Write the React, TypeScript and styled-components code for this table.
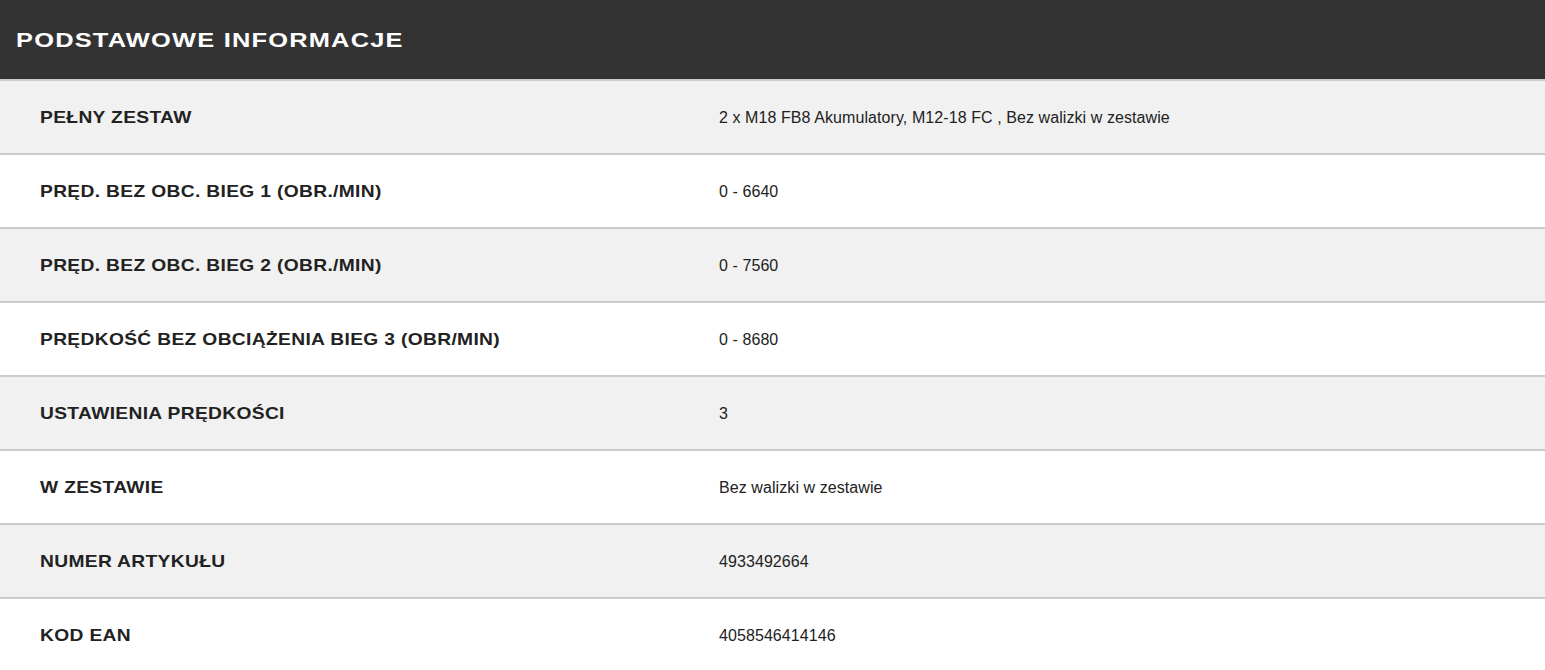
import styled, { createGlobalStyle } from "styled-components";

const GlobalStyle = createGlobalStyle`
    body {
        margin: 0;
        background: #ffffff;
        font-family: "Liberation Sans", Arial, sans-serif;
    }
`;

const Section = styled.section`
    width: 100%;
    overflow: hidden;
`;

const Header = styled.header`
    height: 79px;
    background-color: #333333;
    display: flex;
    align-items: center;
    padding-left: 16px;
`;

// the original font is an extended grotesk, so stretch Liberation a bit
const Title = styled.h2`
    margin: 0;
    color: #ffffff;
    font-size: 21px;
    font-weight: 700;
    letter-spacing: 1px;
    transform: scaleX(1.21);
    transform-origin: left center;
    white-space: nowrap;
`;

const SpecList = styled.dl`
    margin: 0;
`;

// odd rows are grey, even rows white
const Row = styled.div<{ $striped: boolean }>`
    display: grid;
    grid-template-columns: 719px 1fr;
    align-items: center;
    height: 72px;
    border-top: 2px solid #cccccc;
    background-color: ${(props) => (props.$striped ? "#f1f1f1" : "#ffffff")};
`;

const Label = styled.dt`
    padding-left: 40px;
    padding-top: 1px;
    color: #222222;
    font-size: 17px;
    font-weight: 700;
`;

const LabelText = styled.span`
    display: inline-block;
    letter-spacing: 0.3px;
    transform: scaleX(1.13);
    transform-origin: left center;
    white-space: nowrap;
`;

const Value = styled.dd`
    margin: 0;
    padding-top: 2px;
    color: #222222;
    font-size: 16px;
    letter-spacing: 0.08px;
`;

interface Spec {
    label: string;
    value: string;
}

const specs: Spec[] = [
    { label: "PEŁNY ZESTAW", value: "2 x M18 FB8 Akumulatory, M12-18 FC , Bez walizki w zestawie" },
    { label: "PRĘD. BEZ OBC. BIEG 1 (OBR./MIN)", value: "0 - 6640" },
    { label: "PRĘD. BEZ OBC. BIEG 2 (OBR./MIN)", value: "0 - 7560" },
    { label: "PRĘDKOŚĆ BEZ OBCIĄŻENIA BIEG 3 (OBR/MIN)", value: "0 - 8680" },
    { label: "USTAWIENIA PRĘDKOŚCI", value: "3" },
    { label: "W ZESTAWIE", value: "Bez walizki w zestawie" },
    { label: "NUMER ARTYKUŁU", value: "4933492664" },
    { label: "KOD EAN", value: "4058546414146" },
];

function App() {
    return (
        <Section>
            <GlobalStyle />
            <Header>
                <Title>PODSTAWOWE INFORMACJE</Title>
            </Header>
            <SpecList>
                {specs.map((spec, i) => (
                    <Row key={spec.label} $striped={i % 2 === 0}>
                        <Label>
                            <LabelText>{spec.label}</LabelText>
                        </Label>
                        <Value>{spec.value}</Value>
                    </Row>
                ))}
            </SpecList>
        </Section>
    );
}

export default App;
